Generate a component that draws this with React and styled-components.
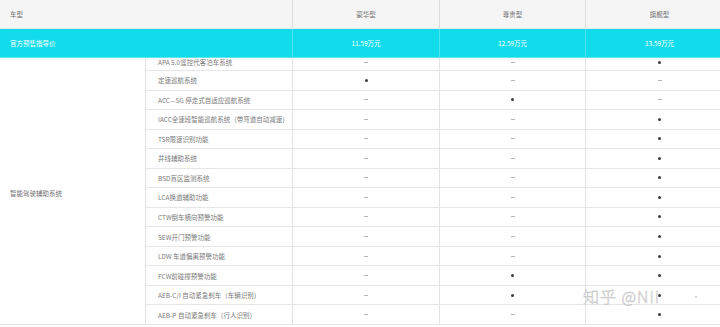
import React from "react";
import styled, { createGlobalStyle } from "styled-components";

const Global = createGlobalStyle`
  html, body { margin: 0; padding: 0; background: #fff; overflow: hidden; }
  body { width: 720px; height: 327px; font-family: "Noto Sans CJK SC", "Noto Sans", sans-serif; }
`;

const COLS = "145px 147px 147px 146px 148px";

const Page = styled.div`
  position: relative;
  width: 720px;
  height: 327px;
  overflow: hidden;
`;

const Table = styled.div`
  width: 733px;
`;

const HeadRow = styled.div`
  display: grid;
  grid-template-columns: ${COLS};
  height: 29px;
  background: ${(p) => (p.$accent ? "#12dbeb" : "#f5f5f6")};
  border-bottom: 1px solid ${(p) => (p.$accent ? "#5fe7f1" : "#e8e8ea")};
  box-sizing: border-box;
`;

const HeadCell = styled.div`
  display: flex;
  align-items: center;
  justify-content: ${(p) => (p.$center ? "center" : "flex-start")};
  padding-left: ${(p) => (p.$center ? "0" : "10px")};
  font-size: 6.5px;
  color: ${(p) => (p.$accent ? "#ffffff" : "#707070")};
  border-left: ${(p) =>
    p.$line ? `1px solid ${p.$accent ? "#4fe5f0" : "#dcdcdf"}` : "none"};
  box-sizing: border-box;
`;

const Body = styled.div`
  display: grid;
  grid-template-columns: ${COLS};
  grid-template-rows: 13px repeat(13, 19.54px);
`;

const GroupCell = styled.div`
  grid-row: 1 / span 14;
  display: flex;
  align-items: center;
  padding-left: 10px;
  padding-top: 4px;
  font-size: 6.5px;
  color: #707070;
  border-bottom: 1px solid #e3e3e6;
  box-sizing: border-box;
`;

const Cell = styled.div`
  display: flex;
  align-items: ${(p) => (p.$top ? "flex-start" : "center")};
  justify-content: ${(p) => (p.$center ? "center" : "flex-start")};
  padding-left: ${(p) => (p.$center ? "0" : "12px")};
  line-height: ${(p) => (p.$top ? "8px" : "normal")};
  font-size: 6.5px;
  color: #7a7a7a;
  border-bottom: 1px solid #e6e6e8;
  border-left: 1px solid #e3e3e6;
  box-sizing: border-box;
  overflow: hidden;
  white-space: nowrap;
`;

const Dot = styled.span`
  display: inline-block;
  width: 3px;
  height: 3px;
  border-radius: 50%;
  background: #3c3c3c;
  margin-top: ${(p) => (p.$top ? "2.5px" : "0")};
`;

const Dash = styled.span`
  display: inline-block;
  width: 4px;
  height: 1px;
  background: #b5b5b5;
  margin-top: ${(p) => (p.$top ? "3.5px" : "0")};
`;

const Watermark = styled.div`
  position: absolute;
  left: 583px;
  top: 284px;
  font-size: 16px;
  letter-spacing: 1px;
  color: #ffffff;
  font-family: "Noto Sans CJK SC", sans-serif;
  font-weight: 300;
  -webkit-text-stroke: 0.5px #c2c2c2;
  white-space: nowrap;
`;

const WDot = styled.span`
  position: absolute;
  left: 695px;
  top: 296px;
  width: 2px;
  height: 2px;
  border-radius: 50%;
  background: #c8c8c8;
`;

const rows = [
  ["APA 5.0遥控代客泊车系统", 0, 0, 1],
  ["定速巡航系统", 1, 0, 0],
  ["ACC—SG 停走式自适应巡航系统", 0, 1, 0],
  ["IACC全速段智能巡航系统（带弯道自动减速）", 0, 0, 1],
  ["TSR限速识别功能", 0, 0, 1],
  ["并线辅助系统", 0, 0, 1],
  ["BSD盲区监测系统", 0, 0, 1],
  ["LCA换道辅助功能", 0, 0, 1],
  ["CTW倒车横向预警功能", 0, 0, 1],
  ["SEW开门预警功能", 0, 0, 1],
  ["LDW 车道偏离预警功能", 0, 0, 1],
  ["FCW前碰撞预警功能", 0, 1, 1],
  ["AEB-C/I 自动紧急刹车（车辆识别）", 0, 1, 1],
  ["AEB-P 自动紧急刹车（行人识别）", 0, 0, 1],
];

export default function App() {
  return (
    <Page>
      <Global />
      <Table>
        <HeadRow>
          <HeadCell>车型</HeadCell>
          <HeadCell />
          <HeadCell $center $line>豪华型</HeadCell>
          <HeadCell $center $line>尊贵型</HeadCell>
          <HeadCell $center $line>旗舰型</HeadCell>
        </HeadRow>
        <HeadRow $accent>
          <HeadCell $accent>官方预售指导价</HeadCell>
          <HeadCell $accent />
          <HeadCell $accent $center $line>11.59万元</HeadCell>
          <HeadCell $accent $center $line>12.59万元</HeadCell>
          <HeadCell $accent $center $line>13.59万元</HeadCell>
        </HeadRow>
        <Body>
          <GroupCell>智能驾驶辅助系统</GroupCell>
          {rows.map(([name, ...vals], i) => (
            <React.Fragment key={name}>
              <Cell $top={i === 0}>{name}</Cell>
              {vals.map((v, j) => (
                <Cell key={j} $center $top={i === 0}>
                  {v ? <Dot $top={i === 0} /> : <Dash $top={i === 0} />}
                </Cell>
              ))}
            </React.Fragment>
          ))}
        </Body>
      </Table>
      <Watermark>知乎 @NII</Watermark>
      <WDot />
    </Page>
  );
}
